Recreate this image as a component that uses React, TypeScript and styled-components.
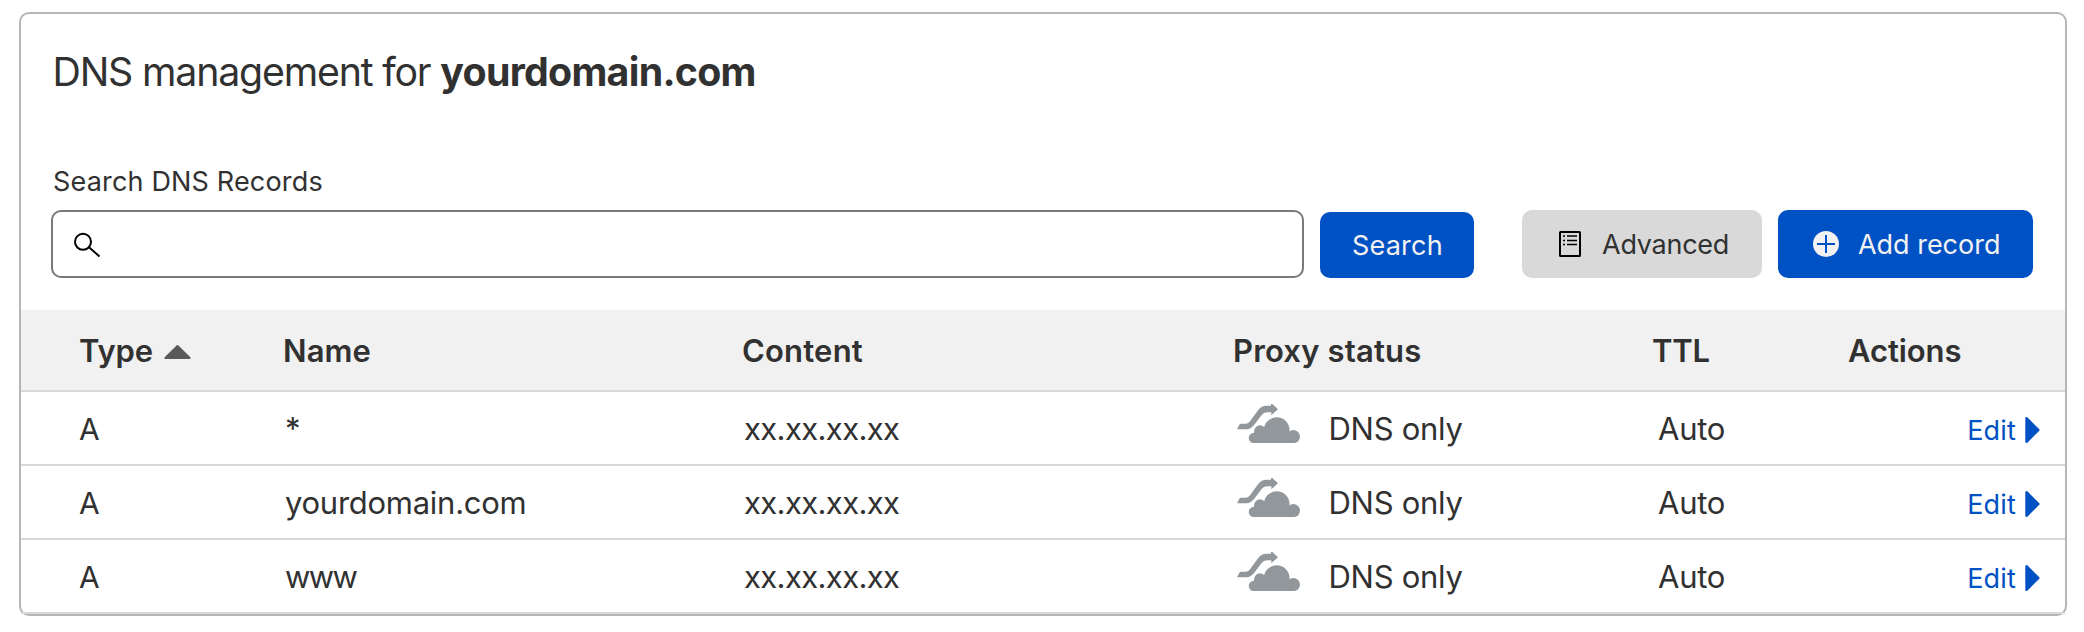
import React from "react";
import styled, { createGlobalStyle } from "styled-components";

const GlobalStyle = createGlobalStyle`
  *, *::before, *::after { box-sizing: border-box; }
  body { margin: 0; background: #fff; color: #313131; font-family: Inter, "Liberation Sans", sans-serif; }
`;

const Panel = styled.main`
  margin: 12px 17px 0 19px;
  height: 604px;
  border: 2px solid #b6b6b6;
  border-radius: 10px;
  background: #fff;
`;

const PanelTop = styled.header`
  padding: 34px 32px 32px 30px;
`;

const Title = styled.h1`
  margin: 0 0 70px 1.5px;
  font-size: 39.3px;
  font-weight: 400;
  line-height: 48px;
  letter-spacing: -1.18px;
`;

const Domain = styled.strong`
  font-weight: 700;
  letter-spacing: -0.72px;
`;

const Label = styled.label`
  display: block;
  margin: 0 0 12px 2px;
  font-size: 27px;
  line-height: 32px;
  letter-spacing: 0.17px;
`;

const Toolbar = styled.div`
  display: flex;
  align-items: flex-end;
`;

const SearchBox = styled.div`
  flex: 1;
  display: flex;
  align-items: center;
  height: 68px;
  margin-right: 16px;
  padding: 0 20px;
  border: 2px solid #797979;
  border-radius: 10px;

  svg { flex: none; display: block; margin-top: 2px; }
`;

const SearchInput = styled.input`
  flex: 1;
  min-width: 0;
  margin-left: 12px;
  border: 0;
  outline: 0;
  background: transparent;
  font: 400 27px Inter, sans-serif;
  color: inherit;
`;

const Button = styled.button<{ $tone: "primary" | "neutral"; $width: number; $height?: number; $spacing?: number }>`
  flex: none;
  display: flex;
  align-items: center;
  width: ${(p) => p.$width}px;
  height: ${(p) => p.$height ?? 68}px;
  padding: 0 0 0 35px;
  border: 0;
  border-radius: 10px;
  background: ${(p) => (p.$tone === "primary" ? "#0051c3" : "#d9d9d9")};
  color: ${(p) => (p.$tone === "primary" ? "#f2f2f2" : "#313131")};
  font: 400 27px/32px Inter, sans-serif;
  letter-spacing: ${(p) => p.$spacing ?? 0}px;

  svg { flex: none; display: block; }
`;

const Caption = styled.span`
  padding-top: 2px;
`;

const SearchButton = styled(Button)`
  padding: 0 0 0 32px;
  margin-right: 48px;
`;

const AdvancedButton = styled(Button)`
  gap: 21px;
  padding-left: 37px;
  margin-right: 16px;
`;

const AddButton = styled(Button)`
  gap: 19px;
`;

const Row = styled.div<{ $head?: boolean }>`
  display: grid;
  grid-template-columns: 204px 459px 491px 419px 196px 1fr;
  align-items: center;
  height: ${(p) => (p.$head ? 82 : 74)}px;
  padding-left: 58px;
  border-bottom: 2px solid #d9d9d9;
  background: ${(p) => (p.$head ? "#f1f1f1" : "transparent")};
`;

const HeadCell = styled.div<{ $spacing?: number }>`
  display: flex;
  align-items: center;
  padding-top: 2px;
  font-size: 31px;
  font-weight: 600;
  line-height: 38px;
  letter-spacing: ${(p) => p.$spacing ?? 0}px;
  white-space: nowrap;

  svg { display: block; margin: 2px 0 0 11px; }
`;

const Cell = styled.div<{ $indent?: number; $spacing?: number; $size?: number }>`
  display: flex;
  align-items: center;
  padding: 2px 0 0 ${(p) => p.$indent ?? 0}px;
  font-size: ${(p) => p.$size ?? 31}px;
  line-height: 38px;
  letter-spacing: ${(p) => p.$spacing ?? 0}px;
  white-space: nowrap;
`;

const ProxyCell = styled(Cell)`
  gap: 28.5px;

  svg { flex: none; display: block; margin-top: -11px; }
`;

const EditLink = styled.a`
  display: flex;
  align-items: center;
  justify-content: flex-end;
  gap: 9px;
  padding: 4px 25px 0 0;
  color: #0051c3;
  font-size: 27px;
  line-height: 32px;
  letter-spacing: 0.17px;
  text-decoration: none;
`;

const SearchIcon = () => (
  <svg width="28" height="26" viewBox="0 0 28 26" fill="none" stroke="#000" strokeWidth="2">
    <circle cx="10" cy="9.8" r="8" />
    <path d="M16 15.2 26.5 24.4" />
  </svg>
);

const ListIcon = () => (
  <svg width="22" height="26" viewBox="0 0 22 26" fill="none" stroke="#000">
    <rect x="1" y="1" width="20" height="24" rx="0.6" strokeWidth="2" />
    <path d="M4 5h2M8 5h10M4 9.5h2M8 9.5h10M4 13.5h2M8 13.5h10" strokeWidth="1.7" />
  </svg>
);

const PlusIcon = () => (
  <svg width="26" height="26" viewBox="0 0 26 26">
    <circle cx="13" cy="13" r="13" fill="#f2f2f2" />
    <path d="M13 4v18M4 13h18" stroke="#0051c3" strokeWidth="2" />
  </svg>
);

const SortIcon = () => (
  <svg width="27" height="14" viewBox="0 0 27 14" fill="#595959">
    <path d="M12.6.4q.9-.7 1.8 0l12 11.8q.7 1.3-.9 1.8h-24q-1.6-.5-.9-1.8z" />
  </svg>
);

const EditIcon = () => (
  <svg width="15" height="26" viewBox="0 0 15 26" fill="#0051c3">
    <path d="M.3 1q.4-1.4 2-.7l12 11.9q.7.8 0 1.6l-12 11.9q-1.6.7-2-.7z" />
  </svg>
);

const CloudIcon = () => (
  <svg width="63" height="39.33" viewBox="111 71 189 118" fill="#92979b">
    <path d="M111 147 119 132Q120 130 122 130H137Q144 130 149 124L173 91Q184 76 198 76H213V71H217L234 87 214 105V96H201Q191 96 185 104L164 132Q153 147 139 147Z" />
    <circle cx="162" cy="172.8" r="15.7" />
    <circle cx="180" cy="152.5" r="17.5" />
    <circle cx="230" cy="149.5" r="38.5" />
    <circle cx="280.3" cy="168.8" r="19.7" />
    <rect x="162" y="154" width="118.500" height="34.500" />
  </svg>
);

const records = [
  { type: "A", name: "*", spacing: 0, content: "xx.xx.xx.xx" },
  { type: "A", name: "yourdomain.com", spacing: -0.27, content: "xx.xx.xx.xx" },
  { type: "A", name: "www", spacing: -1.6, content: "xx.xx.xx.xx" },
];

export default function App() {
  return (
    <>
      <GlobalStyle />
      <Panel>
        <PanelTop>
          <Title>
            DNS management for <Domain>yourdomain.com</Domain>
          </Title>
          <Label htmlFor="dns-search">Search DNS Records</Label>
          <Toolbar>
            <SearchBox>
              <SearchIcon />
              <SearchInput id="dns-search" />
            </SearchBox>
            <SearchButton $tone="primary" $width={154} $height={66} $spacing={0.2}>
              <Caption>Search</Caption>
            </SearchButton>
            <AdvancedButton $tone="neutral" $width={240} $spacing={-0.25}>
              <ListIcon />
              <Caption>Advanced</Caption>
            </AdvancedButton>
            <AddButton $tone="primary" $width={255} $spacing={-0.02}>
              <PlusIcon />
              <Caption>Add record</Caption>
            </AddButton>
          </Toolbar>
        </PanelTop>
        <Row $head>
          <HeadCell $spacing={-0.1}>
            Type
            <SortIcon />
          </HeadCell>
          <HeadCell $spacing={0.1}>Name</HeadCell>
          <HeadCell $spacing={0.2}>Content</HeadCell>
          <HeadCell $spacing={0.17}>Proxy status</HeadCell>
          <HeadCell $spacing={-0.21}>TTL</HeadCell>
          <HeadCell $spacing={-0.1}>Actions</HeadCell>
        </Row>
        {records.map((r) => (
          <Row key={r.name}>
            <Cell $size={30}>{r.type}</Cell>
            <Cell $indent={2} $spacing={r.spacing}>{r.name}</Cell>
            <Cell $indent={2} $spacing={-0.62}>{r.content}</Cell>
            <ProxyCell $indent={4} $spacing={-0.27}>
              <CloudIcon />
              DNS only
            </ProxyCell>
            <Cell $indent={6} $spacing={-0.25}>Auto</Cell>
            <EditLink href="#">
              <Caption>Edit</Caption>
              <EditIcon />
            </EditLink>
          </Row>
        ))}
      </Panel>
    </>
  );
}
